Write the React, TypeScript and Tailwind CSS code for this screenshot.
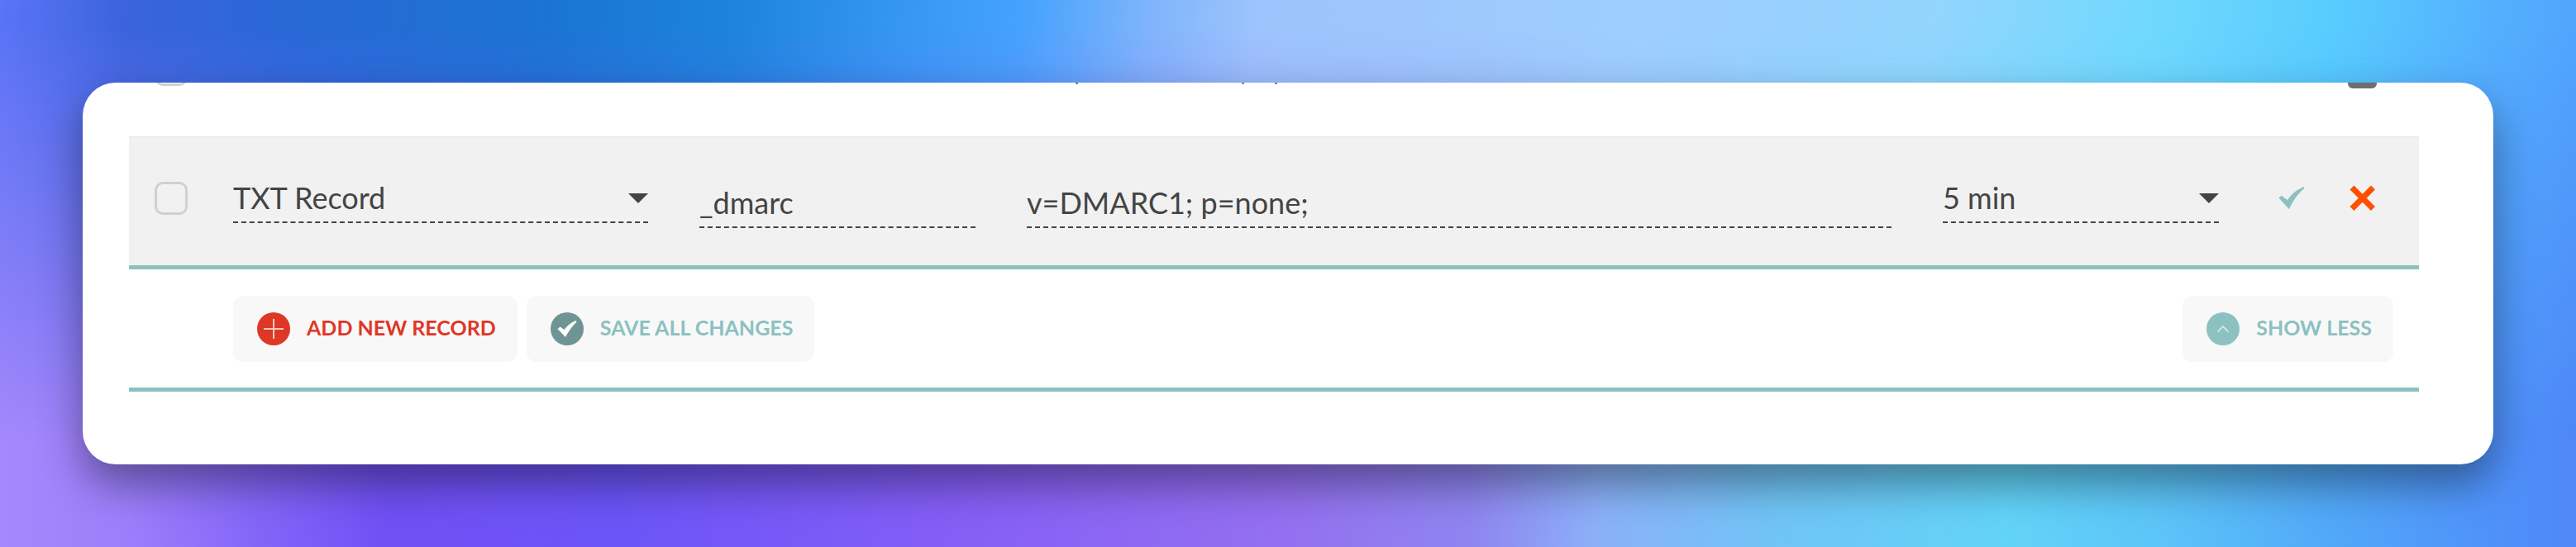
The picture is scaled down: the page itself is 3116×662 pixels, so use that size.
import { useState } from 'react';
import type { ReactNode } from 'react';

// One DNS host record being edited
interface DnsRecord {
  type: string;
  host: string;
  value: string;
  ttl: string;
}

const recordTypes = ['A Record', 'CNAME Record', 'TXT Record', 'URL Redirect Record'];
const ttlOptions = ['Automatic', '1 min', '5 min', '20 min', '30 min', '60 min'];

// Underlined drop-down with a solid caret on the right
function SelectField({
  label,
  value,
  options,
  onChange,
}: {
  label: string;
  value: string;
  options: string[];
  onChange: (value: string) => void;
}) {
  return (
    <div className="relative min-w-0">
      <select
        aria-label={label}
        value={value}
        onChange={(e) => onChange(e.target.value)}
        className="block h-15 w-full appearance-none rounded-none border-b-2 border-dashed border-[#444] bg-transparent pr-10 outline-none"
      >
        {options.map((option) => (
          <option key={option}>{option}</option>
        ))}
      </select>
      <svg viewBox="0 0 24 12" className="pointer-events-none absolute top-6 right-0 h-3 w-6 fill-[#444]">
        <path d="M0 0h24L12 12z" />
      </svg>
    </div>
  );
}

// Underlined text box
function TextField({ label, value, onChange }: { label: string; value: string; onChange: (value: string) => void }) {
  return (
    <div className="min-w-0 pt-3">
      <input
        type="text"
        aria-label={label}
        value={value}
        onChange={(e) => onChange(e.target.value)}
        className="block h-15 w-full border-b-2 border-dashed border-[#444] bg-transparent outline-none"
      />
    </div>
  );
}

function ActionButton({ icon, className, children }: { icon: ReactNode; className: string; children: ReactNode }) {
  return (
    <button
      type="button"
      className={`flex h-20 items-center gap-5 rounded-xl bg-[#f8f8f8] pr-[26px] pl-[29px] text-[25px] leading-8 font-bold whitespace-nowrap ${className}`}
    >
      {icon}
      <span className="pb-1">{children}</span>
    </button>
  );
}

const checkbox = 'block size-10 shrink-0 appearance-none rounded-[10px] border-3 border-[#d0d0d0]';

export default function App() {
  const [record, setRecord] = useState<DnsRecord>({
    type: 'TXT Record',
    host: '_dmarc',
    value: 'v=DMARC1; p=none;',
    ttl: '5 min',
  });

  const update = (changes: Partial<DnsRecord>) => setRecord({ ...record, ...changes });

  return (
    <main className="relative isolate min-h-screen bg-[linear-gradient(90deg,#a588fc_0%,#9c7efb_5%,#8565f8_10%,#7050f5_15%,#6c54f8_24%,#865ff6_38%,#9470f0_50%,#8f84f0_57%,#8bb0f8_62%,#70c4f6_69%,#62d3f8_78%,#5cc4f8_84%,#52aaf8_90%,#4f90fa_97%,#4f88f8_100%)] p-25 font-[Lato,'Open_Sans',sans-serif] text-[#444]">
      {/* Upper half of the backdrop, fading into the lower one */}
      <div className="absolute inset-0 -z-10 bg-[linear-gradient(95deg,#5b74f8_0%,#3a63dc_5%,#2968d6_11%,#1b74d3_21%,#1c84db_28%,#3496f0_34%,#45a2fd_39%,#80b4fb_44%,#9dc4fc_48%,#9fcdfe_62%,#92d5fd_74%,#70d8fd_82%,#58ccfe_89%,#54b0fe_95%,#4f9ffb_100%)] [mask-image:linear-gradient(180deg,black_5%,transparent_80%)]" />

      <section className="overflow-hidden rounded-[40px] bg-white pr-[90px] pb-22 pl-14 shadow-[0_24px_50px_rgba(0,0,0,0.4)]">
        {/* End of the previous record, scrolled out of view */}
        <div className="flex h-[65px] items-start pr-[51px] pl-[31px]">
          <input type="checkbox" aria-label="Select previous record" className={`${checkbox} -mt-9`} />
          <div className="flex flex-1 pl-[1074px] text-[#6e9494]">
            <span className="h-0.5 w-[3px] bg-current" />
            <span className="ml-[198px] h-0.5 w-[3px] bg-current" />
            <span className="ml-[37px] h-0.5 w-[3px] bg-current" />
          </div>
          <button type="button" aria-label="Delete previous record" className="h-[7px] w-[35px] rounded-b-md bg-[#6e6e6e]" />
        </div>

        {/* Record in edit mode */}
        <div className="flex items-center border-t-2 border-b-5 border-t-[#eaeaea] border-b-[#8bc1c1] bg-[#f1f1f1] pt-[37px] pr-[52px] pb-[45px] pl-[31px] text-4xl">
          <input type="checkbox" aria-label="Select record" className={checkbox} />
          <div className="ml-[55px] grid flex-1 grid-cols-[502fr_334fr_1046fr_334fr] items-center gap-x-[62px]">
            <SelectField label="Type" value={record.type} options={recordTypes} onChange={(type) => update({ type })} />
            <TextField label="Host" value={record.host} onChange={(host) => update({ host })} />
            <TextField label="Value" value={record.value} onChange={(value) => update({ value })} />
            <SelectField label="TTL" value={record.ttl} options={ttlOptions} onChange={(ttl) => update({ ttl })} />
          </div>
          <button type="button" aria-label="Save record" className="ml-[72px]">
            <svg viewBox="0 0 32 32" className="size-8 fill-[#8bc1c1]">
              <path d="M.5 15.5l3-2.8L11 18C16 10.500 22.500 5.500 31 2v2.200C24 10 17.500 19 13 29.300z" />
            </svg>
          </button>
          <button type="button" aria-label="Discard record" className="ml-[54px]">
            <svg viewBox="0 0 32 32" className="size-8 fill-none stroke-[#ff5000] stroke-[7]">
              <path d="M3 3l25.500 25.500M28.500 3L3 28.500" />
            </svg>
          </button>
        </div>

        {/* Actions for the whole table */}
        <div className="flex gap-[11px] border-b-5 border-[#8bc1c1] pt-8 pr-[31px] pb-[31px] pl-[126px]">
          <ActionButton
            className="text-[#df3726]"
            icon={
              <svg viewBox="0 0 40 40" className="size-10 fill-none">
                <circle cx="20" cy="20" r="20" fill="#df3726" />
                <path d="M20 8v24M8 20h24" stroke="#f9c5bf" strokeWidth="2" />
              </svg>
            }
          >
            ADD NEW RECORD
          </ActionButton>
          <ActionButton
            className="text-[#8bc1c1]"
            icon={
              <svg viewBox="0 0 40 40" className="size-10">
                <circle cx="20" cy="20" r="20" fill="#6e9494" />
                <path d="M8.500 20l3-2.500 5 3.500C20 16 25 12.500 30.500 10l1 1.500C26 17 21.500 23 18 30z" fill="#fff" />
              </svg>
            }
          >
            SAVE ALL CHANGES
          </ActionButton>
          <div className="ml-auto">
            <ActionButton
              className="text-[#8bc1c1]"
              icon={
                <svg viewBox="0 0 40 40" className="size-10 fill-none">
                  <circle cx="20" cy="20" r="20" fill="#8bc1c1" />
                  <path d="M13.500 23.500L20 17l6.500 6.500" stroke="#e4f1f1" strokeWidth="1.500" />
                </svg>
              }
            >
              SHOW LESS
            </ActionButton>
          </div>
        </div>
      </section>
    </main>
  );
}
